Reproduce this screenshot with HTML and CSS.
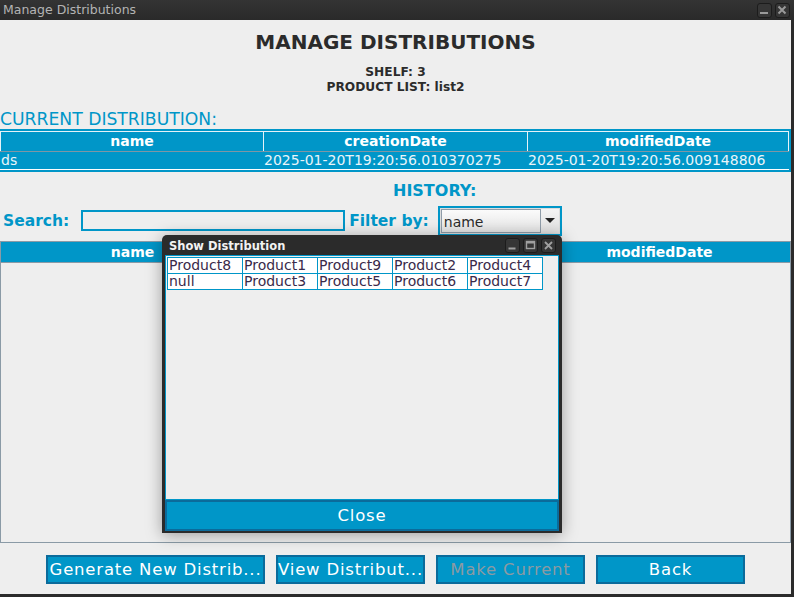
FILE: index.html
```html
<!DOCTYPE html>
<html>
<head>
<meta charset="utf-8">
<link rel="stylesheet" href="styles.css">
</head>
<body>
<div class="window">
  <div class="titlebar">
    <span class="title">Manage Distributions</span>
    <div class="wm-btns">
      <span class="wm-btn"><svg width="15" height="15" viewBox="0 0 15 15"><rect x="3" y="9" width="8" height="2" fill="#9a9a9a"/></svg></span>
      <span class="wm-btn"><svg width="15" height="15" viewBox="0 0 15 15"><path d="M3.5 3.5 L10.5 10.5 M10.5 3.5 L3.5 10.5" stroke="#9a9a9a" stroke-width="2"/></svg></span>
    </div>
  </div>
  <div class="content">
    <h1 class="main-title">MANAGE DISTRIBUTIONS</h1>
    <div class="sub">SHELF: 3<br>PRODUCT LIST: list2</div>
    <div class="section-label">CURRENT DISTRIBUTION:</div>
    <div class="cur-table">
      <div class="thead">
        <div class="th">name</div>
        <div class="th">creationDate</div>
        <div class="th">modifiedDate</div>
      </div>
      <div class="trow">
        <div class="td">ds</div>
        <div class="td">2025-01-20T19:20:56.010370275</div>
        <div class="td">2025-01-20T19:20:56.009148806</div>
      </div>
    </div>
    <div class="history-label">HISTORY:</div>
    <div class="search-row">
      <span class="lbl search-lbl">Search:</span>
      <div class="search-input"></div>
      <span class="lbl filter-lbl">Filter by:</span>
      <div class="combo">
        <div class="combo-field">name</div>
        <div class="combo-arrow"><svg width="10" height="6" viewBox="0 0 10 6"><path d="M0 0 L10 0 L5 5 Z" fill="#222"/></svg></div>
      </div>
    </div>
    <div class="hist-table">
      <div class="thead hist-head">
        <div class="th">name</div>
        <div class="th"></div>
        <div class="th">modifiedDate</div>
      </div>
      <div class="hist-body"></div>
    </div>
    <div class="buttons">
      <button class="btn btn-wide">Generate New Distrib...</button>
      <button class="btn">View Distribut...</button>
      <button class="btn disabled">Make Current</button>
      <button class="btn">Back</button>
    </div>
  </div>

  <div class="dialog">
    <div class="dlg-title">
      <span class="dlg-title-text">Show Distribution</span>
      <div class="dlg-btns">
        <span class="wm-btn"><svg width="15" height="15" viewBox="0 0 15 15"><rect x="3.5" y="9.5" width="7" height="2" fill="#a0a0a0"/></svg></span>
        <span class="wm-btn"><svg width="15" height="15" viewBox="0 0 15 15"><rect x="3.5" y="3.5" width="8" height="7" fill="none" stroke="#a0a0a0" stroke-width="1.4"/><rect x="3.5" y="3.5" width="8" height="2" fill="#a0a0a0"/></svg></span>
        <span class="wm-btn"><svg width="15" height="15" viewBox="0 0 15 15"><path d="M4 4 L11 11 M11 4 L4 11" stroke="#a0a0a0" stroke-width="1.8"/></svg></span>
      </div>
    </div>
    <div class="dlg-body">
      <div class="grid">
        <div class="cell">Product8</div>
        <div class="cell">Product1</div>
        <div class="cell">Product9</div>
        <div class="cell">Product2</div>
        <div class="cell">Product4</div>
        <div class="cell">null</div>
        <div class="cell">Product3</div>
        <div class="cell">Product5</div>
        <div class="cell">Product6</div>
        <div class="cell">Product7</div>
      </div>
    </div>
    <button class="dlg-close">Close</button>
  </div>
</div>
</body>
</html>
```

FILE: styles.css
```css
* { box-sizing: border-box; }
html, body { margin: 0; padding: 0; }
body {
  width: 794px;
  height: 597px;
  overflow: hidden;
  background: #2a2a2a;
  font-family: "DejaVu Sans", "Liberation Sans", sans-serif;
}
.window {
  position: relative;
  width: 794px;
  height: 597px;
  border-right: 3px solid #2b2b2b;
  border-bottom: 3px solid #2b2b2b;
  background: #eeeeee;
  display: flex;
  flex-direction: column;
}
.titlebar {
  height: 20px;
  flex: none;
  background: linear-gradient(#343434, #2a2a2a);
  display: flex;
  align-items: center;
  justify-content: space-between;
  padding: 0 4px 0 3px;
  margin-right: -3px;
}
.title {
  color: #b4b4b4;
  font-size: 12.5px;
  line-height: 20px;
}
.wm-btns, .dlg-btns {
  display: flex;
  gap: 3px;
  align-items: center;
}
.wm-btn {
  width: 15px;
  height: 15px;
  border: 1px solid #1c1c1c;
  border-radius: 3px;
  background: #363636;
  display: flex;
  align-items: center;
  justify-content: center;
  overflow: hidden;
}
.wm-btn svg { flex: none; }
.content {
  flex: 1;
  display: flex;
  flex-direction: column;
  background: #eeeeee;
}
.main-title {
  margin: 10px 0 0;
  font-size: 20px;
  line-height: 24px;
  font-weight: bold;
  text-align: center;
  color: #2b2b2b;
}
.sub {
  margin-top: 11px;
  font-size: 12.2px;
  line-height: 15px;
  font-weight: bold;
  text-align: center;
  color: #2b2b2b;
}
.section-label {
  margin-top: 15px;
  height: 19px;
  font-size: 17.2px;
  line-height: 19px;
  color: #0096c8;
}
.cur-table {
  width: 791px;
  background: #0096c8;
  padding: 2px 2px 2px 0;
}
.thead {
  display: grid;
  grid-template-columns: 263px 264px 1fr;
  height: 21px;
  background: #0096c8;
  border-bottom: 1px solid #7f96a4;
}
.th {
  color: #ffffff;
  font-weight: bold;
  font-size: 14px;
  line-height: 19px;
  text-align: center;
  border-left: 1px solid #e6f2f8;
  border-top: 1px solid #e6f2f8;
}
.th:last-child { border-right: 1px solid #e6f2f8; }
.trow {
  display: grid;
  grid-template-columns: 263px 264px 1fr;
  height: 18px;
  border-bottom: 1px solid #ffffff;
}
.td {
  color: #e9f5fa;
  font-size: 14px;
  line-height: 17px;
  padding-left: 1px;
  white-space: nowrap;
}
.history-label {
  margin-top: 10px;
  margin-left: 393px;
  height: 18px;
  font-size: 16px;
  line-height: 18px;
  font-weight: bold;
  color: #0096c8;
}
.search-row {
  margin-top: 6px;
  height: 29px;
  display: flex;
  align-items: center;
}
.lbl {
  font-size: 15.5px;
  font-weight: bold;
  color: #0096c8;
  line-height: 18px;
}
.search-lbl { margin-left: 3px; }
.search-input {
  margin-left: 12px;
  width: 264px;
  height: 21px;
  border: 2px solid #0096c8;
  background: #eeeeee;
}
.filter-lbl { margin-left: 4px; }
.combo {
  margin-left: 9px;
  width: 124px;
  height: 30px;
  border: 2px solid #0096c8;
  display: flex;
  padding: 1px;
  background: #dcdcdc;
}
.combo-field {
  width: 100px;
  border: 1px solid #8f9ca8;
  background: linear-gradient(#fbfbfb, #e3e3e3);
  font-size: 14px;
  line-height: 24px;
  padding-left: 2px;
  color: #2a2a2a;
}
.combo-arrow {
  flex: 1;
  display: flex;
  align-items: center;
  justify-content: center;
  background: linear-gradient(#f4f4f4, #e0e0e0);
}
.hist-table {
  margin-top: 6px;
  width: 791px;
  height: 302px;
  border: 1px solid #8a9aa6;
  display: flex;
  flex-direction: column;
}
.hist-head {
  height: 21px;
  border-bottom: 1px solid #8a9aa6;
}
.hist-head .th { border-top: none; line-height: 20px; }
.hist-head .th:first-child { border-left: none; }
.hist-head .th:last-child { border-right: none; }
.hist-body { flex: 1; background: #eeeeee; }
.buttons {
  margin-top: 12px;
  width: 791px;
  display: flex;
  justify-content: center;
  gap: 11px;
}
.btn {
  width: 149px;
  height: 29px;
  background: #0096c8;
  border: 2px solid #0b6b9b;
  color: #ffffff;
  font-family: "DejaVu Sans", "Liberation Sans", sans-serif;
  font-size: 16.5px;
  letter-spacing: 0.8px;
  padding: 0;
  line-height: 25px;
  white-space: nowrap;
}
.btn-wide { width: 219px; }
.btn.disabled { color: #8c9aa2; }

.dialog {
  position: absolute;
  left: 162px;
  top: 235px;
  width: 400px;
  height: 298px;
  background: #2b2b2b;
  border-radius: 5px 5px 0 0;
  padding: 0 3px 2px;
  box-shadow: 0 2px 16px rgba(0, 0, 0, 0.35);
  display: flex;
  flex-direction: column;
}
.dlg-title {
  height: 20px;
  flex: none;
  display: flex;
  align-items: center;
  justify-content: space-between;
  padding: 1px 3px 0 4px;
}
.dlg-title-text {
  color: #f2f2f2;
  font-weight: bold;
  font-size: 11.5px;
}
.dlg-body {
  height: 245px;
  border: 1px solid #0096c8;
  background: #eeeeee;
  padding: 1px;
}
.grid {
  display: grid;
  grid-template-columns: repeat(5, 75px);
  width: 376px;
  border-left: 1px solid #0096c8;
  border-top: 1px solid #0096c8;
  background: #ffffff;
}
.cell {
  height: 16px;
  border-right: 1px solid #0096c8;
  border-bottom: 1px solid #0096c8;
  font-size: 14px;
  line-height: 15px;
  color: #3a2a4a;
  padding-left: 1px;
  white-space: nowrap;
  overflow: hidden;
}
.dlg-close {
  height: 31px;
  background: #0096c8;
  border: 2px solid #0b6b9b;
  color: #ffffff;
  font-family: "DejaVu Sans", "Liberation Sans", sans-serif;
  font-size: 16.5px;
  letter-spacing: 0.8px;
  padding: 0;
  line-height: 26px;
}
```
